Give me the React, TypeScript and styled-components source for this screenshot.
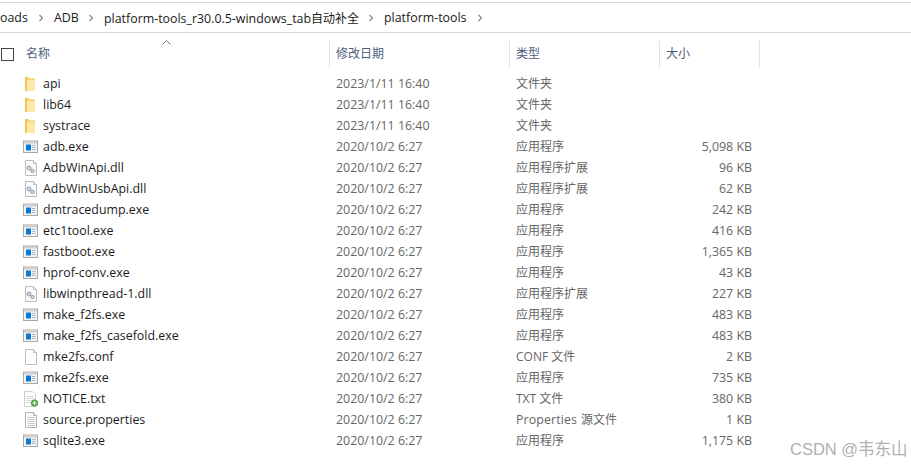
import React from "react";
import styled, { createGlobalStyle } from "styled-components";

const Global = createGlobalStyle`
  html, body { margin: 0; padding: 0; background: #fff; }
  body { font-family: "Open Sans", "Noto Sans CJK SC", sans-serif; overflow: hidden; }
`;
const Page = styled.div`
  position: relative; width: 911px; height: 464px; overflow: hidden; padding-top: 2px; box-sizing: border-box;
`;
const Breadcrumb = styled.div`
  display: flex; align-items: center; height: 29px;
  border-top: 1px solid #d9d9d9; border-bottom: 1px solid #d9d9d9;
  font-size: 12.4px; color: #1a1a1a; white-space: nowrap;
`;
const Crumb = styled.span<{ $w: number }>`
  display: block; width: ${p => p.$w}px; flex: none;
`;
const Han = styled.span`
  font-size: 12px;
`;
const Chevron = styled.svg`
  flex: none; width: 6px; height: 8px; margin: 0 10px 0 9px;
`;
const Header = styled.div`
  display: grid; grid-template-columns: 25px 305px 180px 150px 100px; height: 27px; margin-top: 8px;
  font-size: 12px; color: #4c607a;
`;
const Check = styled.div`
  display: flex; align-items: center; justify-content: flex-start; padding-left: 1px; padding-bottom: 1px;
`;
const Box = styled.div`
  width: 11px; height: 11px; border: 1px solid #444;
`;
const HeadCell = styled.div<{ $line?: boolean }>`
  position: relative; display: flex; align-items: center; padding-left: ${p => (p.$line ? 6 : 1)}px;
  border-right: 1px solid #e3e3e3; padding-bottom: 3px;
`;
const SortArrow = styled.svg`
  position: absolute; left: 137px; top: -1px; width: 9px; height: 5px;
`;
const Rows = styled.div`
  display: flex; flex-direction: column; margin-top: 5px;
`;
const Row = styled.div`
  display: grid; grid-template-columns: 43px 286px 180px 150px 93px; height: 21px; align-items: center;
  font-size: 12.4px; color: #666; white-space: nowrap;
`;
const IconCell = styled.div`
  display: flex; align-items: center; padding-left: 23px; height: 21px;
`;
const NameCell = styled.div`
  color: #1c1c1c;
`;
const Cell = styled.div`
  padding-left: 7px;
`;
const TypeCell = styled(Cell)`
  font-size: 12px; padding-bottom: 2px;
`;
const Latin = styled.span`
  font-size: 12.4px; margin-right: 1px; letter-spacing: 0.1px;
`;
const SizeCell = styled.div`
  text-align: right;
`;
const Watermark = styled.div`
  position: absolute; left: 790px; top: 439px; font-size: 16.5px; line-height: 20px; color: #b0b0b0; white-space: nowrap;
  font-family: "Liberation Sans", "Noto Sans CJK SC", sans-serif;
`;

const Icon = styled.svg`
  width: 16px; height: 16px; display: block; flex: none;
`;

type Kind = "folder" | "exe" | "dll" | "blank" | "txt" | "doc";

const FileIcon = ({ kind }: { kind: Kind }) => {
  if (kind === "folder")
    return (
      <Icon viewBox="0 0 16 16">
        <path d="M2 1h3.5l1 1.5H12v12.5H2z" fill="#f6d26b" />
        <path d="M4 4h8v11H4z" fill="#fde8a6" />
        <path d="M2 1h1.5v14H2z" fill="#eec04f" />
      </Icon>
    );
  if (kind === "exe")
    return (
      <Icon viewBox="0 0 16 16">
        <rect x="0.5" y="2" width="14" height="11.5" fill="#f2f2f2" stroke="#a8a8a8" />
        <rect x="1" y="2.5" width="13" height="2" fill="#cfcfcf" />
        <rect x="3" y="5.5" width="5" height="6" fill="#0a78d7" />
        <path d="M9 6.5h3.5M9 8.5h3.5M9 10.5h3.5" stroke="#a3b9cd" />
      </Icon>
    );
  if (kind === "dll")
    return (
      <Icon viewBox="0 0 16 16">
        <path d="M2.5 0.5h8l3 3v12h-11z" fill="#fbfbfb" stroke="#bdbdbd" />
        <path d="M10.5 0.5v3h3" fill="#eee" stroke="#bdbdbd" />
        <circle cx="6" cy="8" r="2" fill="#cfd8e0" stroke="#8d9eae" />
        <circle cx="9.5" cy="11" r="1.7" fill="#cfd8e0" stroke="#8d9eae" />
      </Icon>
    );
  if (kind === "blank")
    return (
      <Icon viewBox="0 0 16 16">
        <path d="M2.5 0.5h8l3 3v12h-11z" fill="#fff" stroke="#bdbdbd" />
        <path d="M10.5 0.5v3h3" fill="#f2f2f2" stroke="#bdbdbd" />
      </Icon>
    );
  if (kind === "doc")
    return (
      <Icon viewBox="0 0 16 16">
        <path d="M2.5 0.5h8l3 3v12h-11z" fill="#fbfbfb" stroke="#b0b0b0" />
        <path d="M10.5 0.5v3h3" fill="#eee" stroke="#b0b0b0" />
        <path d="M4.5 5.5h7M4.5 7.5h7M4.5 9.5h7M4.5 11.5h7M4.5 13.5h7" stroke="#c8c8c8" />
      </Icon>
    );
  return (
    <Icon viewBox="0 0 16 16">
      <path d="M1.5 0.5h8l3 3v12h-11z" fill="#fbfbfb" stroke="#cfcfcf" />
      <path d="M3.5 5.5h7M3.5 7.5h7M3.5 9.5h5M3.5 11.5h4" stroke="#d6d6d6" />
      <circle cx="11.5" cy="12" r="3.6" fill="#4aa54a" />
      <path d="M11.5 10v4M9.5 12h4" stroke="#fff" strokeWidth="1.2" />
    </Icon>
  );
};

type Item = { k: Kind; n: string; d: string; t: React.ReactNode; s?: string };
const D1 = "2023/1/11 16:40";
const D2 = "2020/10/2 6:27";
const APP = "应用程序";
const EXT = "应用程序扩展";
const items: Item[] = [
  { k: "folder", n: "api", d: D1, t: "文件夹" },
  { k: "folder", n: "lib64", d: D1, t: "文件夹" },
  { k: "folder", n: "systrace", d: D1, t: "文件夹" },
  { k: "exe", n: "adb.exe", d: D2, t: APP, s: "5,098 KB" },
  { k: "dll", n: "AdbWinApi.dll", d: D2, t: EXT, s: "96 KB" },
  { k: "dll", n: "AdbWinUsbApi.dll", d: D2, t: EXT, s: "62 KB" },
  { k: "exe", n: "dmtracedump.exe", d: D2, t: APP, s: "242 KB" },
  { k: "exe", n: "etc1tool.exe", d: D2, t: APP, s: "416 KB" },
  { k: "exe", n: "fastboot.exe", d: D2, t: APP, s: "1,365 KB" },
  { k: "exe", n: "hprof-conv.exe", d: D2, t: APP, s: "43 KB" },
  { k: "dll", n: "libwinpthread-1.dll", d: D2, t: EXT, s: "227 KB" },
  { k: "exe", n: "make_f2fs.exe", d: D2, t: APP, s: "483 KB" },
  { k: "exe", n: "make_f2fs_casefold.exe", d: D2, t: APP, s: "483 KB" },
  { k: "blank", n: "mke2fs.conf", d: D2, t: "CONF 文件", s: "2 KB" },
  { k: "exe", n: "mke2fs.exe", d: D2, t: APP, s: "735 KB" },
  { k: "txt", n: "NOTICE.txt", d: D2, t: "TXT 文件", s: "380 KB" },
  { k: "doc", n: "source.properties", d: D2, t: <><Latin>Properties</Latin> 源文件</>, s: "1 KB" },
  { k: "exe", n: "sqlite3.exe", d: D2, t: APP, s: "1,175 KB" },
];

const Sep = () => (
  <Chevron viewBox="0 0 6 8">
    <path d="M1.5 1l3 3-3 3" fill="none" stroke="#888" strokeWidth="1.2" />
  </Chevron>
);

export default function App() {
  return (
    <Page>
      <Global />
      <Breadcrumb>
        <Crumb $w={29}>oads</Crumb>
        <Sep />
        <Crumb $w={25}>ADB</Crumb>
        <Sep />
        <Crumb $w={255}>platform-tools_r30.0.5-windows_tab<Han>自动补全</Han></Crumb>
        <Sep />
        <Crumb $w={84}>platform-tools</Crumb>
        <Sep />
      </Breadcrumb>
      <Header>
        <Check><Box /></Check>
        <HeadCell>
          名称
          <SortArrow viewBox="0 0 9 5">
            <path d="M0.5 4.5l4-4 4 4" fill="none" stroke="#777" />
          </SortArrow>
        </HeadCell>
        <HeadCell $line>修改日期</HeadCell>
        <HeadCell $line>类型</HeadCell>
        <HeadCell $line>大小</HeadCell>
      </Header>
      <Rows>
        {items.map(i => (
          <Row key={i.n}>
            <IconCell><FileIcon kind={i.k} /></IconCell>
            <NameCell>{i.n}</NameCell>
            <Cell>{i.d}</Cell>
            <TypeCell>{i.t}</TypeCell>
            <SizeCell>{i.s}</SizeCell>
          </Row>
        ))}
      </Rows>
      <Watermark>CSDN @韦东山</Watermark>
    </Page>
  );
}
